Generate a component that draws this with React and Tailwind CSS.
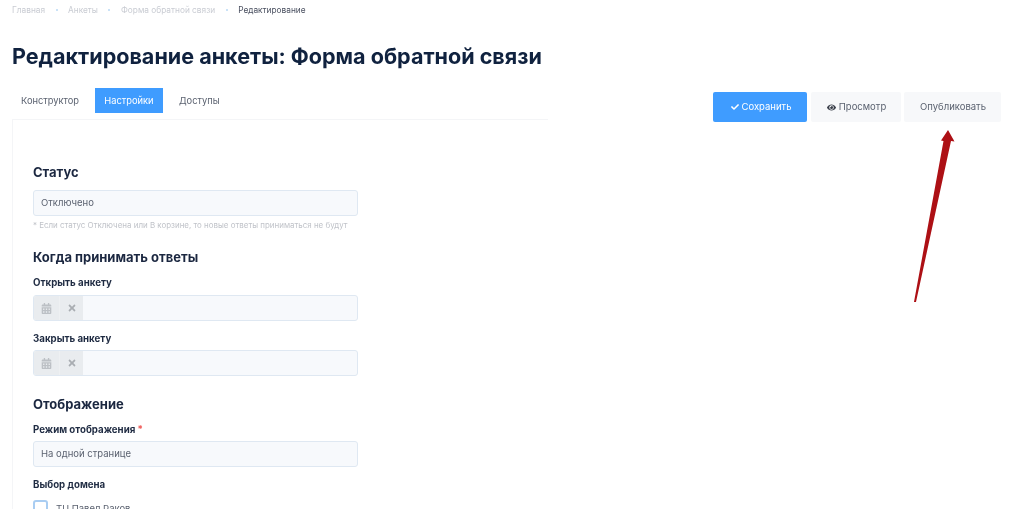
import React from 'react';
import { FaCalendarAlt, FaCheck, FaEye, FaTimes } from 'react-icons/fa';

const crumbs = ['Главная', 'Анкеты', 'Форма обратной связи'];

const Field = ({ children }) => (
  <div className="flex h-[26px] w-[325px] items-center rounded-[3px] border border-[#dfe8f2] bg-[#f7f9fc] px-[7px] text-[9.5px] text-[#5b6270]">
    {children}
  </div>
);

const DateField = () => (
  <div className="flex h-[26px] w-[325px] overflow-hidden rounded-[3px] border border-[#dfe8f2] bg-[#f7f9fc]">
    <div className="flex w-[26px] items-center justify-center border-r border-[#eef0f2] bg-[#e9ecef]">
      <FaCalendarAlt size={11} className="text-[#bcc0c5]" />
    </div>
    <div className="flex w-[23px] items-center justify-center bg-[#e9ecef]">
      <FaTimes size={10} className="text-[#a9adb2]" />
    </div>
  </div>
);

const Label = ({ children, className = '' }) => (
  <div className={`text-[9.7px] leading-3 font-bold text-[#1f2b42] ${className}`}>{children}</div>
);

const Heading = ({ children, className = '' }) => (
  <div className={`text-[13px] leading-4 font-bold text-[#1b2740] ${className}`}>{children}</div>
);

export default function App() {
  return (
    <div className="relative h-[509px] w-[1024px] overflow-hidden bg-white font-['Inter',sans-serif] blur-[0.4px]">
      <div className="flex items-center gap-[10.5px] pt-[4px] pl-[12px] text-[8.3px] leading-3 text-[#c9ccd3]">
        {crumbs.map((c) => (
          <React.Fragment key={c}>
            <span>{c}</span>
            <span className="h-[2px] w-[2px] rounded-full bg-[#b9d8f5]" />
          </React.Fragment>
        ))}
        <span className="text-[#4a5060]">Редактирование</span>
      </div>

      <h1 className="mt-[26px] pl-[12px] text-[21.55px] leading-[29px] font-bold text-[#10223f]">
        Редактирование анкеты: Форма обратной связи
      </h1>

      <div className="mt-[17px] flex items-start">
        <div className="ml-[12px] w-[536px]">
          <div className="flex h-[31px] items-start pl-[9px] text-[9.3px] text-[#5b6270]">
            <div className="flex h-[25px] items-center">Конструктор</div>
            <div className="ml-[16px] flex h-[25px] w-[68px] items-center justify-center bg-[#3f9cff] text-white">Настройки</div>
            <div className="ml-[16px] flex h-[25px] items-center">Доступы</div>
          </div>
          <div className="h-[400px] border-t border-l border-[#f4f5f7] pt-[44px] pl-[20px]">
            <Heading>Статус</Heading>
            <div className="mt-[10px]"><Field>Отключено</Field></div>
            <div className="mt-[4px] text-[7.95px] leading-[10px] text-[#c0c3c9]">
              * Если статус Отключена или В корзине, то новые ответы приниматься не будут
            </div>
            <Heading className="mt-[19px]">Когда принимать ответы</Heading>
            <Label className="mt-[12px]">Открыть анкету</Label>
            <div className="mt-[6px]"><DateField /></div>
            <Label className="mt-[12px]">Закрыть анкету</Label>
            <div className="mt-[5px]"><DateField /></div>
            <Heading className="mt-[20px]">Отображение</Heading>
            <Label className="mt-[12px]">
              Режим отображения <span className="text-[#f0625f]">*</span>
            </Label>
            <div className="mt-[5px]"><Field>На одной странице</Field></div>
            <Label className="mt-[12px]">Выбор домена</Label>
            <div className="mt-[9px] flex items-start gap-[8px]">
              <div className="h-[16px] w-[15px] rounded-[3px] border-2 border-[#a9cdf2] bg-white" />
              <span className="mt-[2px] text-[9.5px] text-[#5b6270]">ТЦ Павел Раков</span>
            </div>
          </div>
        </div>

        <div className="mt-[4px] ml-[165px] flex h-[30px] gap-[3px] text-[9.5px] text-[#5b6270]">
          <div className="mr-[1px] flex w-[94px] items-center justify-center gap-[3px] rounded-[2px] bg-[#3f9cff] pl-[2px] text-white">
            <FaCheck size={8} />
            Сохранить
          </div>
          <div className="flex w-[90px] items-center justify-center gap-[3px] rounded-[2px] bg-[#f7f8fa] pl-[1px]">
            <FaEye size={9} className="text-[#3a3f4a]" />
            Просмотр
          </div>
          <div className="flex w-[97px] items-center justify-center rounded-[2px] bg-[#f7f8fa] pl-[1px]">Опубликовать</div>
        </div>
      </div>

      <svg className="absolute top-[128px] left-[908px]" width="50" height="178" viewBox="0 0 50 178">
        <path d="M40 2 L46.5 13.5 L43 13 L8 174 L6 174 L35.5 13 L33 12.5 Z" fill="#ad1015" />
      </svg>
    </div>
  );
}
